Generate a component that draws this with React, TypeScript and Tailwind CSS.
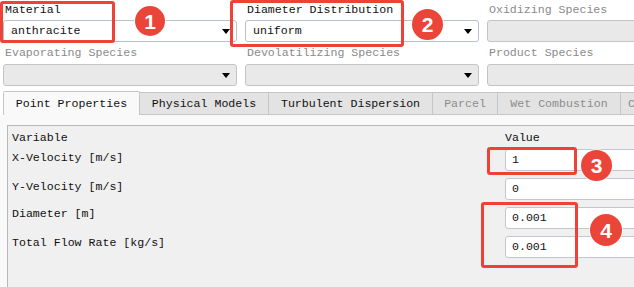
import React from 'react';

const mono = { fontFamily: '"Liberation Mono", "DejaVu Sans Mono", monospace' };

const Arrow = () => (
  <svg width="8" height="5" viewBox="0 0 8 5" className="absolute right-[6px] top-[8px]">
    <path d="M0 0 H8 L4 5 Z" fill="#000" />
  </svg>
);

const Select = ({ value, disabled, arrow = true }: { value?: string; disabled?: boolean; arrow?: boolean }) => (
  <div
    className={`relative h-[22px] rounded-[3px] border ${
      disabled ? 'bg-[#e9e9e9] border-[#c4c4c4]' : 'bg-white border-[#b9c0cc]'
    } flex items-center pl-[7px]`}
  >
    <span className="text-[#111]">{value}</span>
    {arrow && <Arrow />}
  </div>
);

const Field = ({ label, dim, value, disabled, arrow, labelH }: { label: string; dim?: boolean; value?: string; disabled?: boolean; arrow?: boolean; labelH: string }) => (
  <div className="flex flex-col">
    <div className={`${labelH} flex items-center pl-[2px] ${dim ? 'text-[#8a8a8a]' : 'text-[#111]'}`}>{label}</div>
    <Select value={value} disabled={disabled} arrow={arrow} />
  </div>
);

const tabs = [
  { name: 'Physical Models', w: 'w-[129px]', off: false },
  { name: 'Turbulent Dispersion', w: 'w-[164px]', off: false },
  { name: 'Parcel', w: 'w-[65px]', off: true },
  { name: 'Wet Combustion', w: 'w-[123px]', off: true },
  { name: 'Coll', w: 'w-[40px]', off: true },
];

const rows = [
  { label: 'X-Velocity [m/s]', value: '1' },
  { label: 'Y-Velocity [m/s]', value: '0' },
  { label: 'Diameter [m]', value: '0.001' },
  { label: 'Total Flow Rate [kg/s]', value: '0.001' },
];

const Badge = ({ n, cls }: { n: string; cls: string }) => (
  <div
    className={`absolute ${cls} rounded-full bg-[#ea4538] ring-1 ring-white/70 flex items-center justify-center text-white font-bold text-[21px] leading-none font-['Liberation_Sans',Arial,sans-serif]`}
  >
    {n}
  </div>
);

export default function App() {
  return (
    <div className="relative w-[634px] h-[287px] overflow-hidden bg-white text-[11.6px]" style={mono}>
      {/* species selectors */}
      <div className="grid grid-cols-[234px_234px_170px] gap-x-[8px] pl-[3px]">
        <Field label="Material" value="anthracite" labelH="h-[20px]" />
        <Field label="Diameter Distribution" value="uniform" labelH="h-[20px]" />
        <Field label="Oxidizing Species" dim disabled arrow={false} labelH="h-[20px]" />
        <Field label="Evaporating Species" dim disabled labelH="h-[22px]" />
        <Field label="Devolatilizing Species" dim disabled labelH="h-[22px]" />
        <Field label="Product Species" dim disabled arrow={false} labelH="h-[22px]" />
      </div>

      {/* tabs */}
      <div className="flex items-start pl-[3px] mt-[5px] h-[24px] whitespace-nowrap overflow-hidden">
        <div className="shrink-0 h-[24px] w-[137px] border border-b-0 border-[#c6c6c6] bg-[#f9f9f9] flex items-center justify-center text-[#111] rounded-t-[2px]">
          Point Properties
        </div>
        {tabs.map((t) => (
          <div
            key={t.name}
            className={`${t.w} shrink-0 mt-[1px] h-[23px] border border-l-0 border-[#c6c6c6] bg-[#e3e3e3] flex items-center overflow-hidden ${
              t.name === 'Coll' ? 'justify-start pl-[7px]' : 'justify-center'
            } ${t.off ? 'text-[#8c8c8c]' : 'text-[#111]'}`}
          >
            {t.name}
          </div>
        ))}
      </div>

      {/* content */}
      <div className="bg-[#f9f9f9] h-[200px] pl-[7px] pt-[10px]">
        <div className="h-full border-l border-t border-[#b8b8b8] bg-[#f0f0f0] pl-[4px] overflow-hidden">
          <div className="flex h-[23px] items-center">
            <div className="shrink-0 w-[493px] text-[#111]">Variable</div>
            <div className="text-[#111]">Value</div>
          </div>
          {rows.map((r, i) => (
            <div key={r.label} className="flex h-[29px]">
              <div className={`shrink-0 w-[493px] h-[16px] flex items-center text-[#111] ${i < 2 ? 'mt-[1px]' : 'mt-[-1px]'}`}>{r.label}</div>
              <div className="shrink-0 w-[160px] h-[22px] bg-white border border-[#c2c7cf] rounded-[3px] flex items-center pl-[6px] text-[#111]">
                {r.value}
              </div>
            </div>
          ))}
        </div>
      </div>

      {/* annotations */}
      <div className="absolute left-0 top-[1px] w-[115px] h-[42px] border-[3px] border-[#ef4136] rounded-[3px]" />
      <div className="absolute left-[230px] top-0 w-[174px] h-[47px] border-[3px] border-[#ef4136] rounded-[3px]" />
      <div className="absolute left-[487px] top-[147px] w-[90px] h-[28px] border-[3px] border-[#ef4136] rounded-[3px]" />
      <div className="absolute left-[481px] top-[202px] w-[97px] h-[66px] border-[3px] border-[#ef4136] rounded-[3px]" />
      <Badge n="1" cls="left-[135px] top-[6px] w-[30px] h-[30px]" />
      <Badge n="2" cls="left-[412px] top-[9px] w-[31px] h-[31px]" />
      <Badge n="3" cls="left-[581px] top-[150px] w-[31px] h-[31px]" />
      <Badge n="4" cls="left-[590px] top-[214px] w-[32px] h-[32px]" />
    </div>
  );
}
